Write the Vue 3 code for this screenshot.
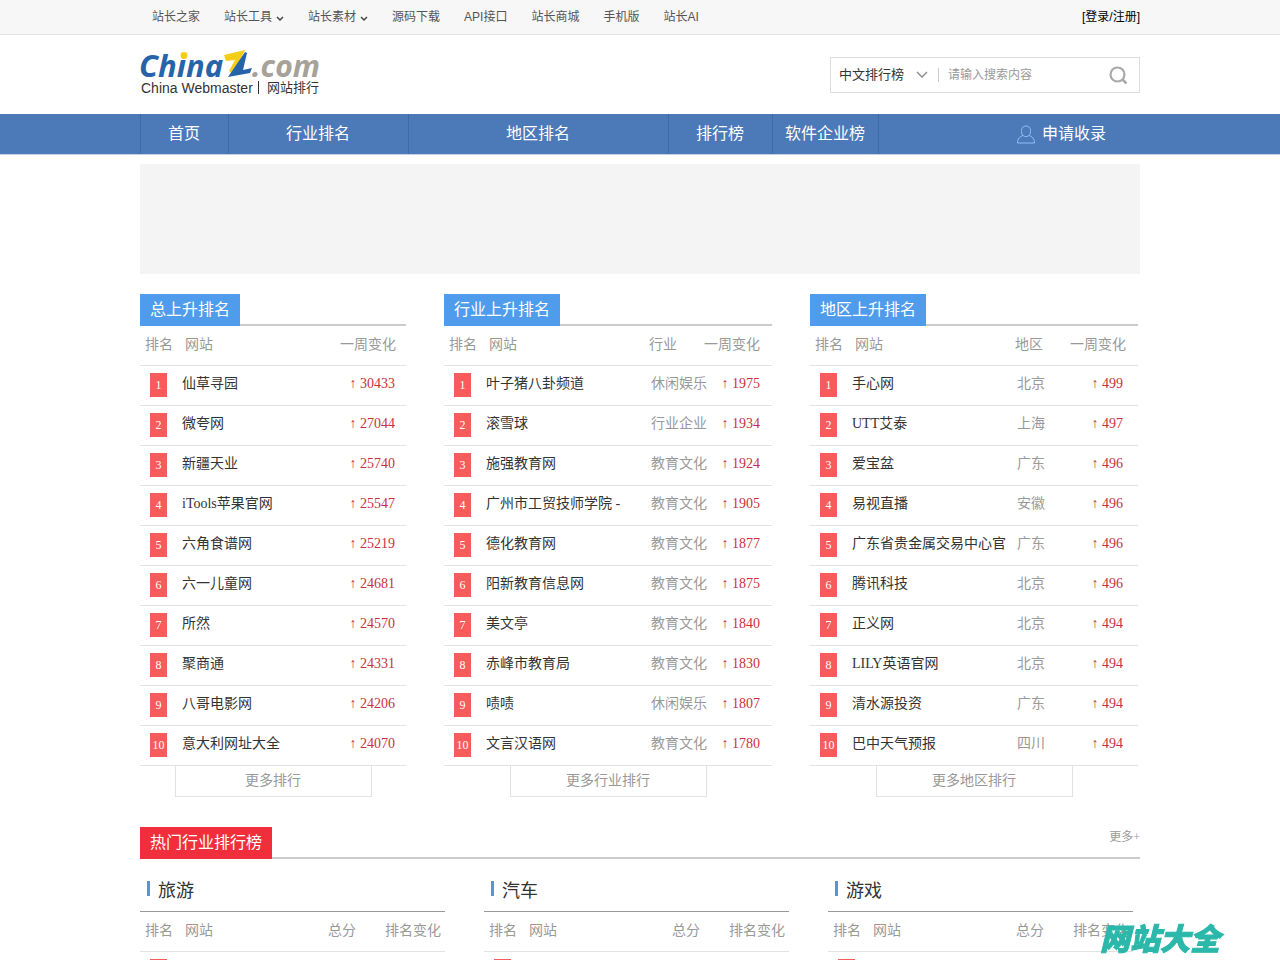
<script setup>
import { ref } from 'vue'

const topLinks = [
  { text: '站长之家' },
  { text: '站长工具', menu: true },
  { text: '站长素材', menu: true },
  { text: '源码下载' },
  { text: 'API接口' },
  { text: '站长商城' },
  { text: '手机版' },
  { text: '站长AI' }
]

const navLinks = ['首页', '行业排名', '地区排名', '排行榜', '软件企业榜']

const scope = ref('中文排行榜')
const keyword = ref('')

const boards = [
  {
    title: '总上升排名',
    more: '更多排行',
    kind: 'total',
    rows: [
      ['仙草寻园', '', 30433],
      ['微夸网', '', 27044],
      ['新疆天业', '', 25740],
      ['iTools苹果官网', '', 25547],
      ['六角食谱网', '', 25219],
      ['六一儿童网', '', 24681],
      ['所然', '', 24570],
      ['聚商通', '', 24331],
      ['八哥电影网', '', 24206],
      ['意大利网址大全', '', 24070]
    ]
  },
  {
    title: '行业上升排名',
    more: '更多行业排行',
    kind: 'industry',
    group: '行业',
    rows: [
      ['叶子猪八卦频道', '休闲娱乐', 1975],
      ['滚雪球', '行业企业', 1934],
      ['施强教育网', '教育文化', 1924],
      ['广州市工贸技师学院 -', '教育文化', 1905],
      ['德化教育网', '教育文化', 1877],
      ['阳新教育信息网', '教育文化', 1875],
      ['美文亭', '教育文化', 1840],
      ['赤峰市教育局', '教育文化', 1830],
      ['啧啧', '休闲娱乐', 1807],
      ['文言汉语网', '教育文化', 1780]
    ]
  },
  {
    title: '地区上升排名',
    more: '更多地区排行',
    kind: 'area',
    group: '地区',
    rows: [
      ['手心网', '北京', 499],
      ['UTT艾泰', '上海', 497],
      ['爱宝盆', '广东', 496],
      ['易视直播', '安徽', 496],
      ['广东省贵金属交易中心官', '广东', 496],
      ['腾讯科技', '北京', 496],
      ['正义网', '北京', 494],
      ['LILY英语官网', '北京', 494],
      ['清水源投资', '广东', 494],
      ['巴中天气预报', '四川', 494]
    ]
  }
]

const hotGroups = ['旅游', '汽车', '游戏']
</script>

<template>
  <div class="page">
    <div class="topbar">
      <div class="wrap topbar-in">
        <a v-for="l in topLinks" :key="l.text" href="#" class="top-link">
          {{ l.text }}
          <svg v-if="l.menu" class="caret" width="8" height="6" viewBox="0 0 8 6" aria-hidden="true">
            <path d="M1 1l3 3 3-3" fill="none" stroke="#444" stroke-width="1.5" />
          </svg>
        </a>
        <a href="#" class="login">[登录/注册]</a>
      </div>
    </div>

    <header class="wrap header">
      <a href="#" class="logo" aria-label="ChinaZ.com 网站排行">
        <svg width="184" height="52" viewBox="0 0 184 52">
          <text class="brand" x="-1" y="28" font-size="31" fill="#2663a9">China</text>
          <circle cx="44" cy="6.500" r="3.400" fill="#f6cd16" />
          <path d="M84 6L105 1 100 11 92 25 89 22 95 11 86 12z" fill="#f6cd16" />
          <path d="M105 3l2 1-4 17 9-2-2 5-22 4z" fill="#2663a9" />
          <text class="brand" x="112" y="28" font-size="30" fill="#a6a199">.com</text>
          <text class="sub" x="1" y="44" font-size="14">China Webmaster</text>
          <path d="M118.500 32v13" stroke="#333" />
          <text class="sub" x="127" y="43" font-size="13">网站排行</text>
        </svg>
      </a>
      <form class="search" @submit.prevent>
        <select v-model="scope" class="scope" aria-label="排行榜类型">
          <option>中文排行榜</option>
        </select>
        <svg class="scope-arrow" width="12" height="7" viewBox="0 0 12 7" aria-hidden="true">
          <path d="M1 1l5 5 5-5" fill="none" stroke="#888" stroke-width="1.300" />
        </svg>
        <input v-model="keyword" class="keyword" type="text" placeholder="请输入搜索内容" aria-label="搜索内容" />
        <button class="go" type="submit" aria-label="搜索">
          <svg width="20" height="20" viewBox="0 0 20 20">
            <circle cx="8.500" cy="9.500" r="7" fill="none" stroke="#aaa" stroke-width="2.200" />
            <path d="M13.500 14.500l4 4" stroke="#aaa" stroke-width="2.500" />
          </svg>
        </button>
      </form>
    </header>

    <nav class="nav">
      <div class="wrap nav-in">
        <a v-for="n in navLinks" :key="n" href="#" class="nav-link">{{ n }}</a>
        <a href="#" class="apply">
          <svg width="18" height="19" viewBox="0 0 18 19" aria-hidden="true">
            <path d="M6 10.500C4.500 9 4.500 7 4.500 5.500 4.500 2.500 6.500 1 9 1s4.500 1.500 4.500 4.500c0 1.500 0 3.500-1.500 5 3 1 5.500 3 5.500 7.500H.5c0-4.500 2.500-6.500 5.500-7.500 2 1.500 4 1.500 6 0" fill="none" stroke="#8fc0f5" />
          </svg>
          申请收录
        </a>
      </div>
    </nav>

    <main class="wrap">
      <div class="banner"></div>

      <div class="boards">
        <section v-for="b in boards" :key="b.title">
          <div class="head"><h2 class="tab">{{ b.title }}</h2></div>
          <table class="rank" :class="b.kind">
            <thead>
              <tr>
                <th class="c-no">排名</th>
                <th>网站</th>
                <th v-if="b.group" class="c-group">{{ b.group }}</th>
                <th class="c-change">一周变化</th>
              </tr>
            </thead>
            <tbody>
              <tr v-for="(r, i) in b.rows" :key="r[0]">
                <td class="c-no"><span class="badge">{{ i + 1 }}</span></td>
                <td><a href="#">{{ r[0] }}</a></td>
                <td v-if="b.group" class="c-group">{{ r[1] }}</td>
                <td class="c-change">↑ {{ r[2] }}</td>
              </tr>
            </tbody>
          </table>
          <a href="#" class="more">{{ b.more }}</a>
        </section>
      </div>

      <div class="head hot-head">
        <h2 class="tab red">热门行业排行榜</h2>
        <a href="#" class="all">更多+</a>
      </div>

      <div class="hot">
        <section v-for="g in hotGroups" :key="g">
          <h3 class="hot-title">{{ g }}</h3>
          <table class="rank score">
            <thead>
              <tr>
                <th class="c-no">排名</th>
                <th>网站</th>
                <th class="c-group">总分</th>
                <th class="c-change">排名变化</th>
              </tr>
            </thead>
            <tbody>
              <tr>
                <td class="c-no"><span class="badge"></span></td>
                <td></td>
                <td class="c-group"></td>
                <td class="c-change"></td>
              </tr>
            </tbody>
          </table>
        </section>
      </div>
    </main>

    <div class="mark">网站大全</div>
  </div>
</template>

<style>
html,
body {
  margin: 0;
  background: #fff;
}
html {
  scrollbar-width: none;
}
</style>

<style scoped>
.page {
  font-family: "Liberation Serif", "Noto Sans CJK SC", serif;
  font-size: 14px;
  color: #333;
}
a {
  color: inherit;
  text-decoration: none;
}
.wrap {
  max-width: 1000px;
  margin: 0 auto;
}
.topbar {
  padding-top: 1px;
  background: #f7f7f7;
  border-bottom: 1px solid #e3e3e3;
  font: 12px/33px "Liberation Sans", "Noto Sans CJK SC", sans-serif;
  color: #555;
}
.topbar-in {
  display: flex;
}
.top-link {
  display: flex;
  align-items: center;
  gap: 4px;
  padding: 0 12px;
}
.caret {
  margin-top: 3px;
}
.login {
  margin-left: auto;
  color: #000;
}
.header {
  display: flex;
  justify-content: space-between;
  align-items: center;
  height: 79px;
}
.logo svg {
  display: block;
  overflow: visible;
}
.brand {
  font-family: "Noto Sans", sans-serif;
  font-weight: 700;
  font-style: italic;
}
.sub {
  font-family: "Liberation Sans", "Noto Sans CJK SC", sans-serif;
  fill: #333;
}
.search {
  box-sizing: border-box;
  display: flex;
  align-items: center;
  width: 310px;
  height: 36px;
  border: 1px solid #ddd;
}
.scope,
.keyword,
.go {
  border: 0;
  padding: 0;
  margin: 0;
  outline: 0;
  background: none;
  appearance: none;
  font-family: "Liberation Sans", "Noto Sans CJK SC", sans-serif;
}
.scope {
  width: 77px;
  padding-left: 8px;
  font-size: 13px;
  color: #333;
}
.scope-arrow {
  margin: 0 10px 0 8px;
}
.keyword {
  flex: 1;
  min-width: 0;
  height: 14px;
  padding-left: 9px;
  border-left: 1px solid #ccc;
  font-size: 12px;
  color: #333;
}
.keyword::placeholder {
  color: #999;
}
.go {
  display: flex;
  padding: 0 10px;
}
.nav {
  background: #4c79b8;
  border-bottom: 1px solid #c3cfe2;
  color: #fff;
  font-size: 16px;
  line-height: 40px;
}
.nav-in {
  display: grid;
  grid-template-columns: 88px 180px 260px 104px 106px 1fr;
  height: 40px;
}
.nav-link {
  text-align: center;
  box-shadow: inset 1px 0 #4069a8;
}
.apply {
  display: flex;
  align-items: center;
  justify-content: flex-end;
  gap: 7px;
  padding-right: 34px;
  box-shadow: inset 1px 0 #4069a8;
}
.banner {
  height: 110px;
  margin: 9px 0 20px;
  background: #f4f4f4;
}
.boards {
  display: grid;
  grid-template-columns: 266fr 328fr 328fr;
  gap: 38px;
  padding-right: 2px;
}
.head {
  display: flex;
  justify-content: space-between;
  height: 32px;
  box-shadow: inset 0 -2px #ccc;
}
.tab {
  margin: 0;
  padding: 0 10px;
  background: #4f9bec;
  color: #fff;
  font-size: 16px;
  font-weight: 400;
  line-height: 32px;
}
.red {
  background: #f12f3c;
}
.hot-head {
  margin-top: 30px;
}
.all {
  font-size: 12px;
  line-height: 20px;
  color: #999;
}
.rank {
  width: 100%;
  table-layout: fixed;
  border-spacing: 0;
}
.rank th,
.rank td {
  padding: 0 0 3px;
  border-bottom: 1px solid #e2e2e2;
  line-height: 36px;
  font-weight: 400;
  text-align: left;
  white-space: nowrap;
  vertical-align: top;
}
.rank th {
  padding: 1px 0 2px 3px;
  color: #999;
}
.rank .c-no {
  width: 42px;
  box-sizing: border-box;
}
.rank th.c-no {
  padding-left: 5px;
}
.rank td.c-no {
  padding: 7px 0 8px 10px;
}
.badge {
  display: block;
  width: 17px;
  height: 24px;
  background: #f75b5b;
  color: #fff;
  font-size: 12px;
  line-height: 24px;
  text-align: center;
}
.rank .c-group {
  width: 55px;
  box-sizing: border-box;
  padding-left: 2px;
  color: #999;
}
.rank th.c-group {
  padding-left: 0;
}
.rank .c-change {
  width: 68px;
  box-sizing: border-box;
  padding-left: 0;
  padding-right: 12px;
  text-align: right;
}
.rank td.c-change {
  color: #c9303e;
}
.total th.c-change {
  padding-right: 10px;
}
.total td.c-change {
  padding-right: 11px;
}
.area td.c-change {
  padding-right: 15px;
}
.score .c-change {
  padding-right: 4px;
}
.score .c-group {
  width: 49px;
}
.more {
  display: block;
  box-sizing: border-box;
  width: 197px;
  margin: 0 auto;
  border: 1px solid #e2e2e2;
  border-top: 0;
  line-height: 30px;
  color: #999;
  text-align: center;
}
.hot {
  display: grid;
  grid-template-columns: repeat(3, 1fr);
  gap: 39px;
  padding-right: 7px;
}
.hot-title {
  display: flex;
  align-items: center;
  gap: 8px;
  margin: 0;
  padding: 12px 7px 0;
  border-bottom: 1px solid #999;
  font-size: 18px;
  font-weight: 400;
  line-height: 40px;
}
.hot-title::before {
  content: "";
  width: 3px;
  height: 15px;
  margin-bottom: 6px;
  background: #5595d8;
}
.mark {
  position: fixed;
  right: 60px;
  bottom: 7px;
  font: italic 900 30px/32px "Noto Sans CJK SC", sans-serif;
  color: #2bb8aa;
  -webkit-text-stroke: 1px #2bb8aa;
}
</style>
